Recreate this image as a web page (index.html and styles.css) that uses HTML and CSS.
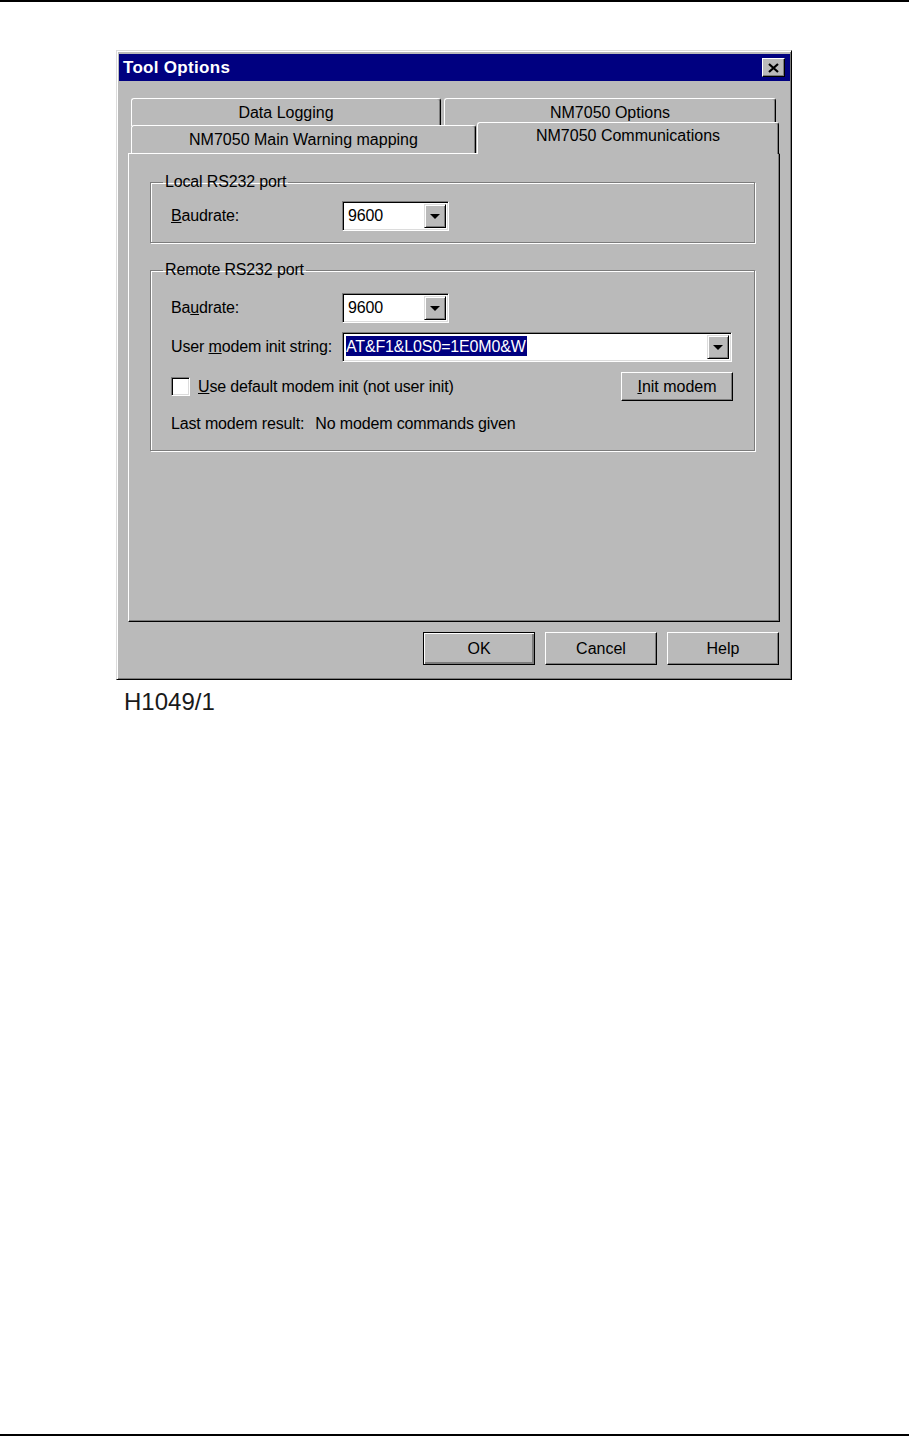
FILE: index.html
```html
<!DOCTYPE html>
<html>
<head>
  <title>Tool Options</title>
  <link rel="stylesheet" href="styles.css">
</head>
<body>
  <div class="page">
    <div class="dialog">
      <div class="titlebar">
        <span class="title">Tool Options</span>
        <span class="close-btn">
          <svg width="11" height="10" viewBox="0 0 11 10"><path d="M1 1 L10 9 M10 1 L1 9" stroke="#000" stroke-width="2.2"/></svg>
        </span>
      </div>

      <div class="dialog-body">
        <div class="tab-row back">
          <div class="tab tab-logging">Data Logging</div>
          <div class="tab tab-options">NM7050 Options</div>
        </div>
        <div class="tab-row front">
          <div class="tab tab-warning">NM7050 Main Warning mapping</div>
          <div class="tab tab-comms selected">NM7050 Communications</div>
        </div>

        <div class="panel">
          <fieldset class="group group-local">
            <legend>Local RS232 port</legend>
            <div class="row">
              <label><u>B</u>audrate:</label>
              <div class="combo small">
                <span class="combo-text">9600</span>
                <span class="arrow-btn"><span class="tri"></span></span>
              </div>
            </div>
          </fieldset>

          <fieldset class="group group-remote">
            <legend>Remote RS232 port</legend>
            <div class="row">
              <label>Ba<u>u</u>drate:</label>
              <div class="combo small">
                <span class="combo-text">9600</span>
                <span class="arrow-btn"><span class="tri"></span></span>
              </div>
            </div>
            <div class="row row-init">
              <label>User <u>m</u>odem init string:</label>
              <div class="combo wide">
                <span class="combo-text"><span class="selection">AT&amp;F1&amp;L0S0=1E0M0&amp;W</span></span>
                <span class="arrow-btn"><span class="tri"></span></span>
              </div>
            </div>
            <div class="row-check">
              <div class="check">
                <span class="checkbox"></span>
                <span><u>U</u>se default modem init (not user init)</span>
              </div>
              <button class="btn init-btn"><u>I</u>nit modem</button>
            </div>
            <div class="row-result">
              <span>Last modem result:</span>
              <span>No modem commands given</span>
            </div>
          </fieldset>
        </div>

        <div class="button-row">
          <button class="btn default">OK</button>
          <button class="btn">Cancel</button>
          <button class="btn">Help</button>
        </div>
      </div>
    </div>
    <div class="caption">H1049/1</div>
  </div>
</body>
</html>
```

FILE: styles.css
```css
body {
  margin: 0;
  background: #fff;
  font-family: "Liberation Sans", Arial, sans-serif;
}

.page {
  min-height: 100vh;
  box-sizing: border-box;
  border-top: 2px solid #000;
  border-bottom: 2px solid #000;
  padding: 48px 0 0 116px;
}

.dialog {
  width: 676px;
  height: 630px;
  box-sizing: border-box;
  background: #bababa;
  border: 1px solid;
  border-color: #dcdcdc #000 #000 #dcdcdc;
  box-shadow: inset 1px 1px #fff, inset -1px -1px #7c7c7c;
  padding: 3px 1px 2px 2px;
  font-size: 16px;
  color: #000;
}

.titlebar {
  height: 27px;
  background: #000080;
  color: #fff;
  display: flex;
  align-items: center;
  justify-content: space-between;
  padding: 0 5px 0 4px;
}

.title {
  font-weight: bold;
  font-size: 17px;
  letter-spacing: 0.3px;
}

.close-btn {
  width: 23px;
  height: 19px;
  box-sizing: border-box;
  background: #bababa;
  border: 1px solid;
  border-color: #fff #000 #000 #fff;
  box-shadow: inset -1px -1px #7c7c7c;
  display: flex;
  align-items: center;
  justify-content: center;
}

.dialog-body {
  padding: 17px 10px 0 9px;
}

/* tabs */
.tab-row {
  display: flex;
  height: 28px;
  padding-left: 3px;
}

.tab-row.back {
  gap: 3px;
}

.tab-row.front {
  gap: 1px;
  margin-top: -1px;
}

.tab {
  box-sizing: border-box;
  height: 28px;
  border-top: 1px solid #fff;
  border-left: 1px solid #fff;
  border-right: 1px solid #000;
  border-radius: 3px 3px 0 0;
  box-shadow: inset -1px 0 #7c7c7c;
  background: #bababa;
  text-align: center;
  line-height: 27px;
}

.tab-logging { width: 310px; }
.tab-options { width: 332px; }
.tab-warning { width: 345px; }

.tab.selected {
  width: 302px;
  height: 32px;
  margin-top: -3px;
  line-height: 26px;
  position: relative;
  z-index: 1;
}

/* panel */
.panel {
  height: 469px;
  box-sizing: border-box;
  border: 1px solid;
  border-color: #fff #000 #000 #fff;
  box-shadow: inset -1px -1px #7c7c7c;
  padding: 19px 24px 0 21px;
  letter-spacing: -0.15px;
}

.group {
  margin: 0;
  border: 1px solid #7c7c7c;
  box-shadow: inset 1px 1px #fff, 1px 1px #fff;
  padding: 10px 21px 11px 20px;
}

.group legend {
  padding: 0 2px;
  margin-left: -8px;
  line-height: 18px;
}

.group-remote {
  margin-top: 18px;
  padding-top: 14px;
  padding-bottom: 16px;
}

.row {
  display: grid;
  grid-template-columns: 171px auto;
  align-items: center;
}

.row-init {
  margin-top: 9px;
}

/* combo boxes */
.combo {
  height: 30px;
  box-sizing: border-box;
  background: #fff;
  border: 1px solid;
  border-color: #7c7c7c #fff #fff #7c7c7c;
  box-shadow: inset 1px 1px #000, inset -1px -1px #dcdcdc;
  display: flex;
  align-items: center;
  justify-content: space-between;
  padding: 2px;
}

.combo.small { width: 107px; }
.combo.wide { width: 390px; }

.combo-text {
  padding-left: 3px;
}

.wide .combo-text {
  padding-left: 1px;
}

.selection {
  background: #000080;
  color: #fff;
  padding: 2px 1px 1px 0;
}

.arrow-btn {
  width: 22px;
  height: 24px;
  box-sizing: border-box;
  background: #bababa;
  border: 1px solid;
  border-color: #dcdcdc #000 #000 #dcdcdc;
  box-shadow: inset 1px 1px #fff, inset -1px -1px #7c7c7c;
  display: flex;
  align-items: center;
  justify-content: center;
}

.tri {
  width: 0;
  height: 0;
  border-left: 5px solid transparent;
  border-right: 5px solid transparent;
  border-top: 5px solid #000;
}

/* checkbox row */
.row-check {
  display: flex;
  justify-content: space-between;
  align-items: center;
  margin-top: 10px;
}

.check {
  display: flex;
  align-items: center;
  gap: 8px;
}

.checkbox {
  width: 19px;
  height: 19px;
  box-sizing: border-box;
  background: #fff;
  border: 1px solid;
  border-color: #7c7c7c #fff #fff #7c7c7c;
  box-shadow: inset 1px 1px #000, inset -1px -1px #dcdcdc;
}

.row-result {
  display: flex;
  gap: 11px;
  margin-top: 13px;
  line-height: 20px;
}

/* buttons */
.btn {
  font-family: "Liberation Sans", Arial, sans-serif;
  font-size: 16px;
  color: #000;
  background: #bababa;
  box-sizing: border-box;
  border: 1px solid;
  border-color: #fff #000 #000 #fff;
  box-shadow: inset -1px -1px #7c7c7c;
  padding: 0;
}

.init-btn {
  width: 112px;
  height: 29px;
}

.button-row {
  display: flex;
  justify-content: flex-end;
  gap: 10px;
  padding-right: 1px;
  margin-top: 10px;
}

.button-row .btn {
  width: 112px;
  height: 33px;
}

.btn.default {
  border: 1px solid #000;
  box-shadow: inset 1px 1px #fff, inset -2px -2px #7c7c7c;
}

.caption {
  margin: 8px 0 0 8px;
  font-size: 24px;
  color: #1a1a1a;
}
```
